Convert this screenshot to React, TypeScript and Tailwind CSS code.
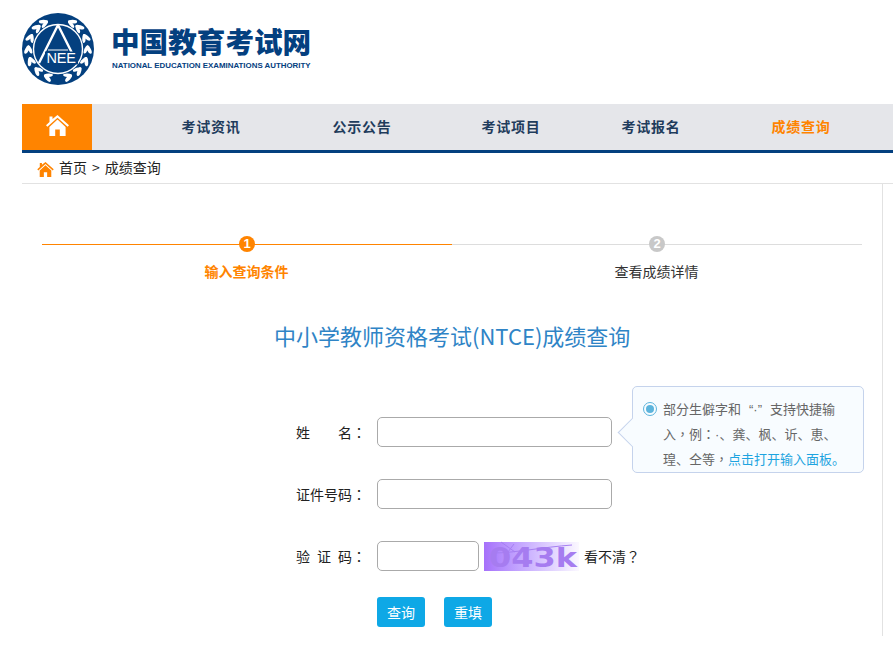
import React from "react";

function Home({ className, color }: { className?: string; color: string }) {
  return (
    <svg viewBox="0 0 23 21" className={className} fill={color}>
      <path d="M3.5 1.5 H6.5 V4 L11.5 0 L23 10.2 L21.6 11.8 L11.5 2.8 L1.4 11.8 L0 10.2 L3.5 7.1 Z" />
      <path d="M11.5 4.6 L3.4 11.9 V21 H9.2 V14.5 H13.8 V21 H19.6 V11.9 Z" />
    </svg>
  );
}

function Wreath() {
  const angles = [20, 43, 66, 89, 112, 135, 152];
  return (
    <g>
      {angles.map((a) => (
        <g key={a} transform={`rotate(${-a} 36 36)`}>
          <g transform="translate(36 67) rotate(-28)">
            <ellipse rx="4.6" ry="1.9" fill="#fff" />
          </g>
          <g transform="translate(36 64) rotate(24)">
            <ellipse rx="4.4" ry="1.7" fill="#fff" />
          </g>
        </g>
      ))}
    </g>
  );
}

function Logo() {
  return (
    <svg viewBox="0 0 72 72" className="w-[72px] h-[72px] shrink-0">
      <circle cx="36" cy="36" r="36" fill="#04407f" />
      <Wreath />
      <g transform="translate(72 0) scale(-1 1)">
        <Wreath />
      </g>
      <circle cx="36" cy="36" r="25.5" fill="#04407f" />
      <circle cx="36" cy="36" r="24.5" fill="none" stroke="#fff" strokeWidth="1.4" />
      <path d="M36 12 L17 50 M36 12 L55 50" stroke="#fff" strokeWidth="2.4" fill="none" />
      <path d="M26 37 H46" stroke="#fff" strokeWidth="1" />
      <rect x="23" y="38.5" width="33" height="13" fill="#04407f" />
      <text x="39" y="50" textAnchor="middle" fill="#fff" fontSize="14.5" fontFamily="Liberation Sans" letterSpacing="-0.2">NEE</text>
    </svg>
  );
}

function Captcha() {
  return (
    <div className="ml-[5px] w-[95px] h-[29px] bg-gradient-to-r from-[#a671fa] to-[#fbf8ff]">
      <svg viewBox="0 0 95 29" className="w-[95px] h-[29px] overflow-visible">
        <path d="M10 11 C 30 11, 60 5, 88 3" stroke="#a67ff2" strokeWidth="1" fill="none" />
        <path d="M17 0 L31 10 M30 2 L24 10" stroke="#a67ff2" strokeWidth="1" fill="none" />
        <text x="5" y="25" fontFamily="DejaVu Sans" fontWeight="bold" fontSize="26" textLength="88" lengthAdjust="spacingAndGlyphs" fill="#a67cf0">043k</text>
      </svg>
    </div>
  );
}

const P = ({ children }: { children: React.ReactNode }) => (
  <span className="font-['Noto_Sans_CJK_TC',sans-serif]">{children}</span>
);

function Row({ label, children }: { label: React.ReactNode; children: React.ReactNode }) {
  return (
    <div className="flex items-center h-[30px]">
      <div className="w-[377px] pl-[296px] text-[14px] text-[#222] whitespace-nowrap">{label}</div>
      {children}
    </div>
  );
}

const nav = [
  ["考试资讯", "w-[150px]"],
  ["公示公告", "w-[152px]"],
  ["考试项目", "w-[146px]"],
  ["考试报名", "w-[134px]"],
  ["成绩查询", "w-[166px]"],
];

export default function App() {
  return (
    <div className="w-[893px] h-[646px] bg-white overflow-hidden font-['Noto_Sans_CJK_SC','Liberation_Sans',sans-serif]">
      <header className="h-[104px] pl-[22px] pt-[13px] flex items-start">
        <Logo />
        <div className="ml-[17px] pt-[13px] text-[#04407f]">
          <div className="text-[28.6px] leading-[30px] font-black whitespace-nowrap">中国教育考试网</div>
          <div className="mt-[5px] ml-[1px] text-[7.9px] leading-[10px] font-bold whitespace-nowrap font-['Liberation_Sans',sans-serif]">NATIONAL EDUCATION EXAMINATIONS AUTHORITY</div>
        </div>
      </header>

      <div className="ml-[22px]">
        <nav className="flex h-[49px] bg-[#e5e6ea] border-b-[3px] border-[#04407f]">
          <div className="w-[70px] h-[46px] bg-[#ff8400] flex items-center justify-center pb-[4px]">
            <Home className="w-[23px] h-[21px]" color="#fff" />
          </div>
          <div className="ml-[44px] flex">
            {nav.map(([t, w], i) => (
              <div
                key={t}
                className={`${w} h-[46px] flex items-center justify-center pb-[2px] text-[14px] tracking-[0.7px] font-bold ${i === 4 ? "text-[#ff8400]" : "text-[#1f3c5c]"}`}
              >
                {t}
              </div>
            ))}
          </div>
        </nav>

        <div className="h-[31px] border-b border-[#e2e2e2] flex items-center pl-[15px] pb-[2px] text-[14px] text-[#222]">
          <Home className="w-[17px] h-[15px] mr-[5px] mt-[4px]" color="#ff8400" />
          <span>首页</span>
          <span className="mx-[5px]">&gt;</span>
          <span>成绩查询</span>
        </div>
      </div>

      <main className="ml-[22px] w-[861px] h-[452px] border-r border-[#e2e2e2]">
        <div className="pl-[20px] pt-[51px]">
          <div className="flex w-[820px] h-[18px] items-center">
            <div className="relative w-[410px] border-t border-[#ff8400]">
              <span className="absolute left-[197px] top-[-9px] w-4 h-4 rounded-full bg-[#ff8400] text-white text-[13px] leading-4 font-bold text-center font-['Liberation_Sans',sans-serif]">1</span>
            </div>
            <div className="relative w-[410px] border-t border-[#dddddd]">
              <span className="absolute left-[197px] top-[-9px] w-4 h-4 rounded-full bg-[#c8c8c8] text-white text-[13px] leading-4 font-bold text-center font-['Liberation_Sans',sans-serif]">2</span>
            </div>
          </div>
          <div className="flex w-[820px] mt-[8px] text-[14px] leading-[20px]">
            <div className="w-[410px] text-center pr-[1px] font-bold text-[#ff8400]">输入查询条件</div>
            <div className="w-[410px] text-center pr-[1px] text-[#333]">查看成绩详情</div>
          </div>
        </div>

        <h1 className="mt-[39px] ml-[252px] text-[22px] leading-[30px] text-[#2f84c6] whitespace-nowrap">中小学教师资格考试(NTCE)成绩查询</h1>

        <div className="relative mt-[67px] -ml-[22px] w-[893px]">
          <Row label={<>姓<span className="ml-[28px]">名</span><P>：</P></>}>
            <input className="w-[235px] h-[30px] rounded-[5px] border border-[#aaaaaa] bg-white outline-none" />
          </Row>
          <div className="h-[32px]" />
          <Row label={<>证件号码<P>：</P></>}>
            <input className="w-[235px] h-[30px] rounded-[5px] border border-[#aaaaaa] bg-white outline-none" />
          </Row>
          <div className="h-[32px]" />
          <Row label={<>验<span className="ml-[7px]">证</span><span className="ml-[7px]">码</span><P>：</P></>}>
            <input className="w-[102px] h-[30px] rounded-[5px] border border-[#aaaaaa] bg-white outline-none" />
            <Captcha />
            <span className="ml-[5px] text-[14px] text-[#222] whitespace-nowrap">看不清<P>？</P></span>
          </Row>
          <div className="flex gap-[19px] pl-[377px] mt-[26px]">
            <button className="w-[48px] h-[30px] rounded-[3px] bg-[#0ea8e6] text-white text-[14px]">查询</button>
            <button className="w-[48px] h-[30px] rounded-[3px] bg-[#0ea8e6] text-white text-[14px]">重填</button>
          </div>

          <div className="absolute left-[632px] top-[-31px] w-[232px] h-[87px] rounded-[5px] border border-[#c5d3ec] bg-[#f8fcff] pl-[10px] pt-[10px] text-[13px] leading-[24px] text-[#666]">
            <span className="absolute left-[-11px] top-[35px] w-[21px] h-[21px] rotate-45 border-l border-b border-[#c5d3ec] bg-[#f8fcff]" />
            <div className="relative flex">
              <span className="mt-[5px] w-[14px] h-[14px] rounded-full border border-[#5db4dc] flex items-center justify-center shrink-0">
                <span className="w-[8px] h-[8px] rounded-full bg-[#5db4dc]" />
              </span>
              <div className="ml-[6px] w-[195px] whitespace-nowrap">
                部分生僻字和<span className="mx-[8px] font-['Liberation_Sans',sans-serif]">“·”</span>支持快捷输<br />
                入<P>，</P>例<P>：</P><span className="font-['Liberation_Sans',sans-serif]">·</span>、龚、枫、䜣、恵、<br />
                瑝、仝等<P>，</P><span className="text-[#1ea4e0]">点击打开输入面板。</span>
              </div>
            </div>
          </div>
        </div>
      </main>
    </div>
  );
}
